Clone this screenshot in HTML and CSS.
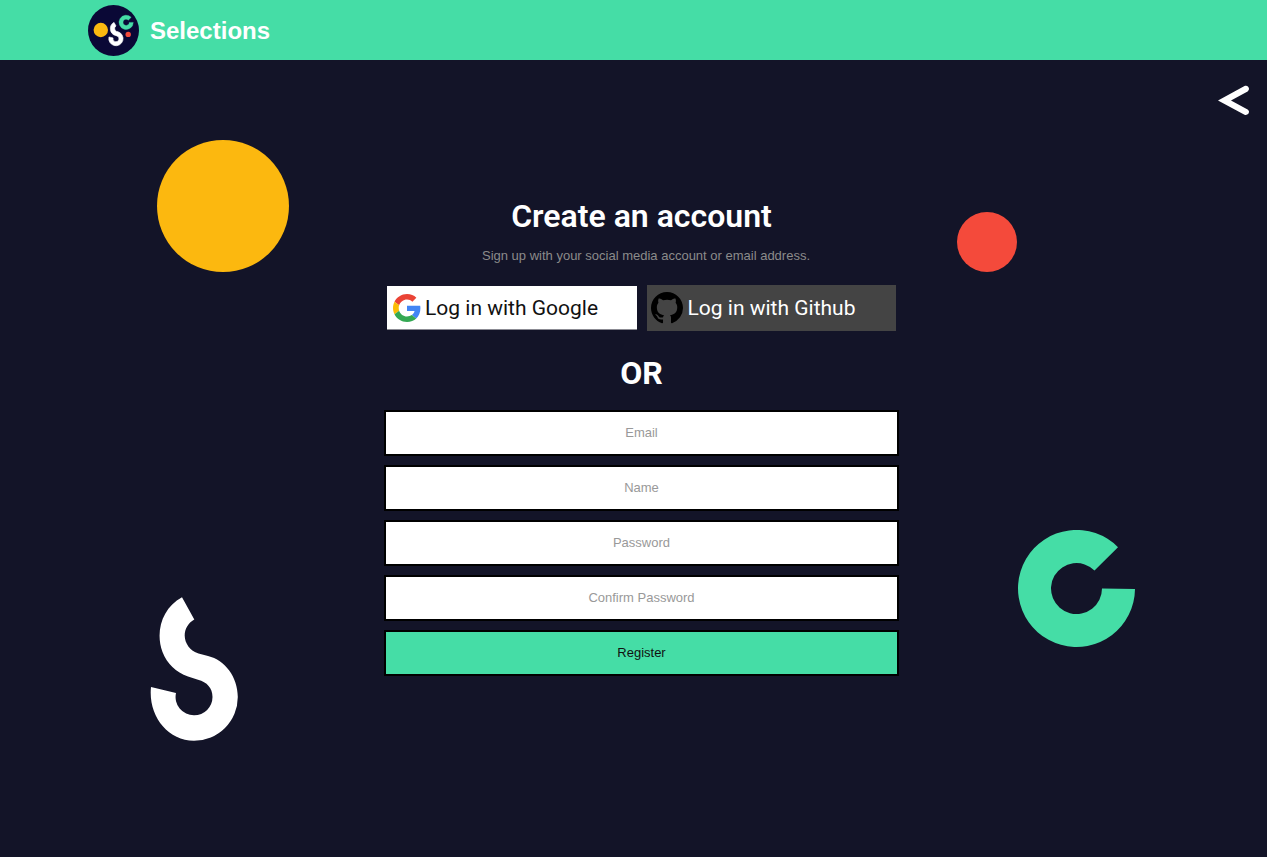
FILE: index.html
```html
<!DOCTYPE html>
<html lang="en">
<head>
<meta charset="utf-8">
<meta name="viewport" content="width=device-width, initial-scale=1">
<title>Selections - Create an account</title>
<link rel="stylesheet" href="styles.css">
</head>
<body>
<header class="topbar">
  <a class="brand" href="#">
    <svg class="brand-logo" viewBox="0 0 51 51" aria-hidden="true">
      <circle cx="25.5" cy="25.5" r="25.5" fill="#0a0836"/>
      <circle cx="12.8" cy="25" r="7.2" fill="#fcb910"/>
      <circle cx="40.2" cy="29.4" r="2.7" fill="#f44a3b"/>
      <path transform="translate(20.8 17.3) scale(.163)" fill="#fff" stroke="#fff" stroke-width="4" stroke-linejoin="round" d="M32 .5A44 44 0 0 0 40.9 80.9L49.3 83.3A18.5 18.5 0 1 1 26 96L1 90A43.8 43.8 0 1 0 56.5 58.1L48.2 56A19 19 0 0 1 44 22.5Z"/>
      <path transform="translate(31 10.2) scale(.122)" fill="#45dda6" stroke="#45dda6" stroke-width="3" d="M100 17.2A58.5 58.5 0 1 0 117 59H84A25.5 25.5 0 1 1 76.5 40.5Z"/>
    </svg>
    <span class="brand-name">Selections</span>
  </a>
</header>
<main class="page">
  <svg class="shape shape-sun" viewBox="0 0 132 132" aria-hidden="true"><circle cx="66" cy="66" r="66" fill="#fcb80f"/></svg>
  <svg class="shape shape-dot" viewBox="0 0 60 60" aria-hidden="true"><circle cx="30" cy="30" r="30" fill="#f44a3b"/></svg>
  <svg class="shape shape-s" viewBox="0 0 88 144" aria-hidden="true"><path fill="#fff" d="M32 .3C12 11 5 35 12.5 55C17 67 26 75 38 79.500L48 82.700C57 85 62.500 91 62.500 100A18.300 18.300 0 0 1 44.200 118.300A18.300 18.300 0 0 1 26 96L1 90C-2 118 17 143.800 44 143.800A43.800 43.800 0 0 0 87.800 100C87.800 80 75 63 58 59L48.500 56.500C40 54 34.700 46 34.700 38.500C34.700 32 38 26 44.300 22.500Z"/></svg>
  <svg class="shape shape-c" viewBox="0 0 117 117" aria-hidden="true"><path fill="#45dda6" d="M100 17.2A58.5 58.5 0 1 0 117 59L84 58.5A25.5 25.5 0 1 1 76.5 40.5Z"/></svg>
  <a class="back" href="#" aria-label="Back">
    <svg viewBox="0 0 32 30" aria-hidden="true"><path fill="#fff" d="M0 15.500 26.500 1C30-.700 32.800 4.200 29.600 6.400L13 15.500 29.600 24.400C32.800 26.600 30 31.200 26.500 29.700Z"/></svg>
  </a>
  <section class="signup">
    <h1 class="title">Create an account</h1>
    <p class="hint">Sign up with your social media account or email address.</p>
    <div class="social">
      <a class="social-btn google" href="#">
        <svg class="google-icon" viewBox="0 0 48 48" aria-hidden="true">
          <path fill="#EA4335" d="M24 9.5c3.54 0 6.71 1.22 9.21 3.6l6.85-6.85C35.9 2.38 30.47 0 24 0 14.62 0 6.51 5.38 2.56 13.22l7.98 6.19C12.43 13.72 17.74 9.5 24 9.5z"/>
          <path fill="#4285F4" d="M46.98 24.55c0-1.57-.15-3.09-.38-4.55H24v9.02h12.94c-.58 2.96-2.26 5.48-4.78 7.18l7.73 6c4.51-4.18 7.09-10.36 7.09-17.65z"/>
          <path fill="#FBBC05" d="M10.53 28.59c-.48-1.45-.76-2.99-.76-4.59s.27-3.14.76-4.59l-7.98-6.19C.92 16.46 0 20.12 0 24c0 3.88.92 7.54 2.56 10.78l7.97-6.19z"/>
          <path fill="#34A853" d="M24 48c6.48 0 11.93-2.13 15.89-5.81l-7.73-6c-2.15 1.45-4.92 2.3-8.16 2.3-6.26 0-11.57-4.22-13.47-9.91l-7.98 6.19C6.51 42.62 14.62 48 24 48z"/>
        </svg>
        <span>Log in with Google</span>
      </a>
      <a class="social-btn github" href="#">
        <svg class="github-icon" viewBox="0 0 16 16" aria-hidden="true"><path d="M8 0C3.58 0 0 3.58 0 8c0 3.54 2.29 6.53 5.47 7.59.4.07.55-.17.55-.38 0-.19-.01-.82-.01-1.49-2.01.37-2.53-.49-2.69-.94-.09-.23-.48-.94-.82-1.13-.28-.15-.68-.52-.01-.53.63-.01 1.08.58 1.23.82.72 1.21 1.87.87 2.33.66.07-.52.28-.87.51-1.07-1.78-.2-3.64-.89-3.64-3.95 0-.87.31-1.59.82-2.15-.08-.2-.36-1.02.08-2.12 0 0 .67-.21 2.2.82.64-.18 1.32-.27 2-.27s1.36.09 2 .27c1.53-1.04 2.2-.82 2.2-.82.44 1.1.16 1.92.08 2.12.51.56.82 1.27.82 2.15 0 3.07-1.87 3.75-3.65 3.95.29.25.54.73.54 1.48 0 1.07-.01 1.93-.01 2.2 0 .21.15.46.55.38A8.01 8.01 0 0 0 16 8c0-4.42-3.58-8-8-8z"/></svg>
        <span>Log in with Github</span>
      </a>
    </div>
    <h2 class="divider">OR</h2>
    <form class="form">
      <input class="field" type="email" placeholder="Email" aria-label="Email">
      <input class="field" type="text" placeholder="Name" aria-label="Name">
      <input class="field" type="password" placeholder="Password" aria-label="Password">
      <input class="field" type="password" placeholder="Confirm Password" aria-label="Confirm Password">
      <button class="field submit" type="button">Register</button>
    </form>
  </section>
</main>
</body>
</html>
```
FILE: styles.css
```css
* { box-sizing: border-box; }

body {
  margin: 0;
  min-height: 100vh;
  display: flex;
  flex-direction: column;
  background: #131428;
  color: #fff;
  font-family: "Liberation Sans", Arial, sans-serif;
}

.topbar {
  display: flex;
  align-items: center;
  height: 60px;
  padding: 1px 88px 0;
  background: #45dda6;
}

.brand {
  display: flex;
  align-items: center;
  gap: 11px;
  color: #fff;
  text-decoration: none;
}

.brand-logo { width: 51px; height: 51px; }

.brand-name { font-size: 24px; font-weight: 700; }

.page {
  position: relative;
  flex: 1;
  display: flex;
  justify-content: center;
  padding: 136px 0 0 16px;
}

.shape { position: absolute; }
.shape-sun { left: 157px; top: 80px; width: 132px; }
.shape-dot { right: 250px; top: 152px; width: 60px; }
.shape-s { left: 150px; top: 537px; width: 88px; }
.shape-c { right: 132px; top: 470px; width: 117px; }

.back {
  position: absolute;
  right: 17px;
  top: 25px;
  width: 32px;
  height: 30px;
}

.back svg { display: block; width: 100%; }

.signup {
  width: 100%;
  max-width: 515px;
  text-align: center;
}

.title,
.divider {
  margin: 0;
  font-family: Roboto, sans-serif;
  font-size: 32px;
  line-height: 40px;
}

.title { font-weight: 600; }
.divider { margin: 22px 0 17px; font-weight: 700; }

.hint {
  margin: 12px 0 21px;
  padding-left: 9px;
  color: #8b8b8b;
  font-size: 13px;
  line-height: 16px;
}

.social {
  display: grid;
  grid-template-columns: 1fr 1fr;
  align-items: center;
  gap: 10px;
  padding: 0 3px;
}

.social-btn {
  display: flex;
  align-items: center;
  gap: 4px;
  font-family: Roboto, sans-serif;
  font-size: 21px;
  text-decoration: none;
}

.google {
  height: 44px;
  padding-left: 6px;
  background: #fff;
  border-bottom: 1px solid #8b8b93;
  color: #111;
}

.github {
  gap: 5px;
  height: 46px;
  padding: 0 0 1px 4px;
  background: #444;
  color: #fff;
}

.google-icon { width: 28px; height: 28px; }
.github-icon { width: 32px; height: 32px; }

.form { display: grid; gap: 9px; }

.field {
  width: 100%;
  height: 46px;
  padding: 0 8px 2px;
  border: 2px solid #000;
  border-radius: 0;
  background: #fff;
  color: #111;
  font-family: inherit;
  font-size: 13px;
  text-align: center;
}

.field::placeholder { color: #999; opacity: 1; }

.submit { background: #45dda6; cursor: pointer; }
```
